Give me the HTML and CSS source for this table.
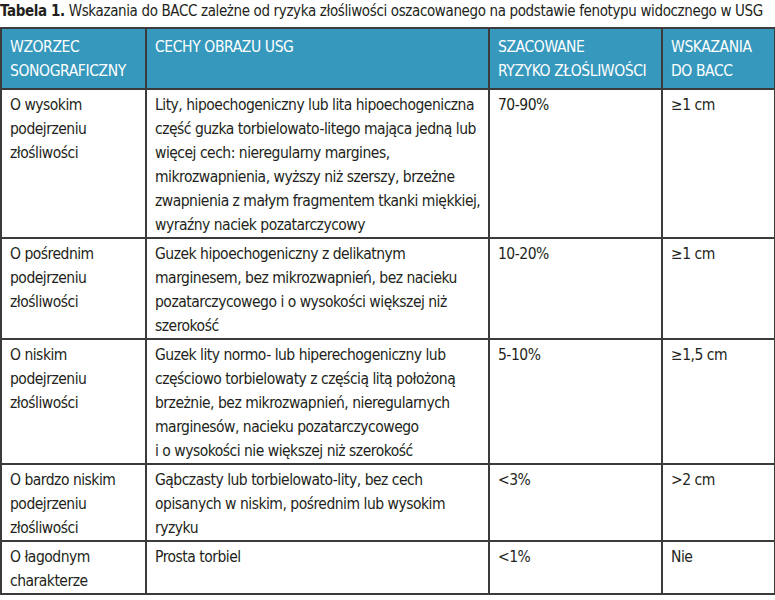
FILE: index.html
```html
<!doctype html>
<html>
<head>
<meta charset="utf-8">
<title>Tabela 1</title>
	<link rel="stylesheet" href="styles.css">
</head>

<body>
	<p class="caption"><b>Tabela 1.</b> Wskazania do BACC zależne od ryzyka złośliwości oszacowanego na podstawie fenotypu widocznego w USG</p>
	<table class="usg-table">
		<colgroup>
			<col class="col-pattern">
			<col class="col-features">
			<col class="col-risk">
			<col class="col-bacc">
		</colgroup>
		<thead>
			<tr>
				<th>WZORZEC<br>SONOGRAFICZNY</th>
				<th>CECHY OBRAZU USG</th>
				<th>SZACOWANE<br>RYZYKO ZŁOŚLIWOŚCI</th>
				<th>WSKAZANIA<br>DO BACC</th>
			</tr>
		</thead>
		<tbody>
			<tr>
				<td>O wysokim<br>podejrzeniu<br>złośliwości</td>
				<td>Lity, hipoechogeniczny lub lita hipoechogeniczna<br>część guzka torbielowato-litego mająca jedną lub<br>więcej cech: nieregularny margines,<br>mikrozwapnienia, wyższy niż szerszy, brzeżne<br>zwapnienia z małym fragmentem tkanki miękkiej,<br>wyraźny naciek pozatarczycowy</td>
				<td>70-90%</td>
				<td>≥1 cm</td>
			</tr>
			<tr>
				<td>O pośrednim<br>podejrzeniu<br>złośliwości</td>
				<td>Guzek hipoechogeniczny z delikatnym<br>marginesem, bez mikrozwapnień, bez nacieku<br>pozatarczycowego i o wysokości większej niż<br>szerokość</td>
				<td>10-20%</td>
				<td>≥1 cm</td>
			</tr>
			<tr>
				<td>O niskim<br>podejrzeniu<br>złośliwości</td>
				<td>Guzek lity normo- lub hiperechogeniczny lub<br>częściowo torbielowaty z częścią litą położoną<br>brzeżnie, bez mikrozwapnień, nieregularnych<br>marginesów, nacieku pozatarczycowego<br>i o wysokości nie większej niż szerokość</td>
				<td>5-10%</td>
				<td>≥1,5 cm</td>
			</tr>
			<tr>
				<td>O bardzo niskim<br>podejrzeniu<br>złośliwości</td>
				<td>Gąbczasty lub torbielowato-lity, bez cech<br>opisanych w niskim, pośrednim lub wysokim<br>ryzyku</td>
				<td>&lt;3%</td>
				<td>&gt;2 cm</td>
			</tr>
			<tr>
				<td>O łagodnym<br>charakterze</td>
				<td>Prosta torbiel</td>
				<td>&lt;1%</td>
				<td>Nie</td>
			</tr>
		</tbody>
	</table>
</body>
</html>
```

FILE: styles.css
```css
*{box-sizing: border-box;}
body{
	margin: 0;
	background-color: #fff;
	color: #231f20;
	font-family: "DejaVu Sans Condensed", "Liberation Sans Narrow", sans-serif;
	font-size: 15.5px;
	letter-spacing: -0.5px;
}
.caption{
	margin: 0 0 4px 0;
	font-size: 15px;
	letter-spacing: -0.37px;
	line-height: 23px;
	white-space: nowrap;
}
.caption b{
	font-weight: bold;
}
.usg-table{
	border-collapse: collapse;
	width: 774px;
	table-layout: fixed;
}
.col-pattern{width: 145px;}
.col-features{width: 343px;}
.col-risk{width: 173px;}
.col-bacc{width: 113px;}
.usg-table th,
.usg-table td{
	border: 2px solid #3b3b3b;
	text-align: left;
	vertical-align: top;
	line-height: 24px;
	white-space: nowrap;
	padding: 3px 8px 0 8px;
}
.usg-table th{
	background-color: #3698bd;
	color: #fff;
	font-size: 15.5px;
	font-weight: normal;
	letter-spacing: -0.4px;
	padding-top: 6px;
	padding-bottom: 5px;
}
```
